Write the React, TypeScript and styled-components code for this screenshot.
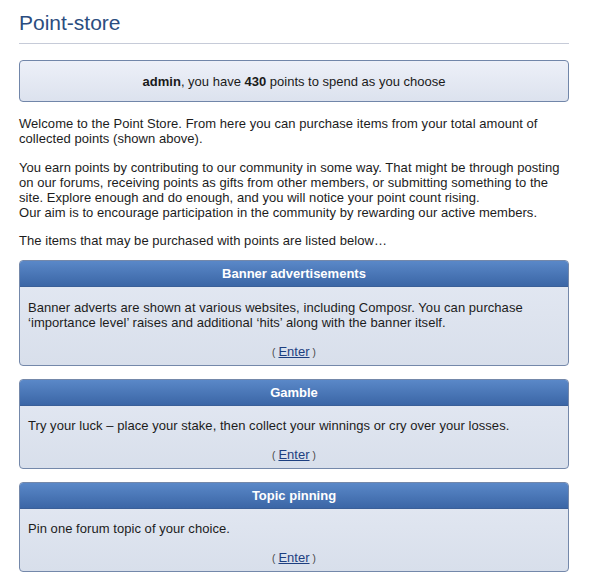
import React from "react";
import styled, { createGlobalStyle } from "styled-components";

const Global = createGlobalStyle`
  html, body { margin: 0; padding: 0; background: #ffffff; }
  body { font-family: "Liberation Sans", Arial, sans-serif; font-size: 13px; color: #1c1c1c; }
`;

const Page = styled.div`
  padding: 11px 20px 0 19px;
`;

const Title = styled.h1`
  margin: 0;
  font-family: "Liberation Sans", Arial, sans-serif;
  font-weight: normal;
  font-size: 21px;
  line-height: 24px;
  color: #2b4d80;
  padding-bottom: 8px;
  border-bottom: 1px solid #c6cbd8;
`;

const PointsBox = styled.div`
  margin-top: 16px;
  height: 40px;
  border: 1px solid #7186a9;
  border-radius: 4px;
  background: linear-gradient(to bottom, #edf0f8, #dce2ee);
  display: flex;
  align-items: center;
  justify-content: center;
  color: #1a1a1a;
`;

const Para = styled.p<{ $tight?: boolean }>`
  margin: ${(p) => (p.$tight ? "13px" : "14px")} 0 0;
  line-height: 15px;
  letter-spacing: 0.05px;
`;

const Box = styled.section<{ $first?: boolean }>`
  margin-top: ${(p) => (p.$first ? "12px" : "13px")};
  border: 1px solid #7488aa;
  border-radius: 4px;
  overflow: hidden;
  background: linear-gradient(to bottom, #e4e9f3, #d8dfeb);
`;

const BoxHeader = styled.h2`
  margin: 0;
  height: 25px;
  line-height: 26px;
  text-align: center;
  font-size: 13px;
  font-weight: bold;
  color: #ffffff;
  background: linear-gradient(to bottom, #5a88c8, #3b66a6);
  border-bottom: 1px solid #3a5f98;
`;

const BoxBody = styled.div<{ $first?: boolean }>`
  padding: ${(p) => (p.$first ? "13px" : "12px")} 8px 5px;
  line-height: 15px;
  letter-spacing: 0.05px;
`;

const EnterRow = styled.div`
  margin-top: 14px;
  text-align: center;
  line-height: 15px;
  letter-spacing: 0;
`;

const Paren = styled.span`
  font-size: 10px;
  color: #444;
`;

const EnterLink = styled.a`
  color: #1d3f80;
  text-decoration: underline;
  margin: 0 3px;
`;

const items = [
  {
    title: "Banner advertisements",
    text: "Banner adverts are shown at various websites, including Composr. You can purchase \u2018importance level\u2019 raises and additional \u2018hits\u2019 along with the banner itself.",
  },
  {
    title: "Gamble",
    text: "Try your luck \u2013 place your stake, then collect your winnings or cry over your losses.",
  },
  { title: "Topic pinning", text: "Pin one forum topic of your choice." },
];

export default function App() {
  return (
    <>
      <Global />
      <Page>
        <Title>Point-store</Title>
        <PointsBox>
          <span>
            <b>admin</b>, you have <b>430</b> points to spend as you choose
          </span>
        </PointsBox>
        <Para>
          Welcome to the Point Store. From here you can purchase items from your total amount of collected points (shown above).
        </Para>
        <Para>
          You earn points by contributing to our community in some way. That might be through posting on our forums, receiving points as gifts from other members, or submitting something to the site. Explore enough and do enough, and you will notice your point count rising.
          <br />
          Our aim is to encourage participation in the community by rewarding our active members.
        </Para>
        <Para $tight>The items that may be purchased with points are listed below…</Para>
        {items.map((it, i) => (
          <Box key={it.title} $first={i === 0}>
            <BoxHeader>{it.title}</BoxHeader>
            <BoxBody $first={i === 0}>
              <div>{it.text}</div>
              <EnterRow>
                <Paren>(</Paren>
                <EnterLink href="#">Enter</EnterLink>
                <Paren>)</Paren>
              </EnterRow>
            </BoxBody>
          </Box>
        ))}
      </Page>
    </>
  );
}
